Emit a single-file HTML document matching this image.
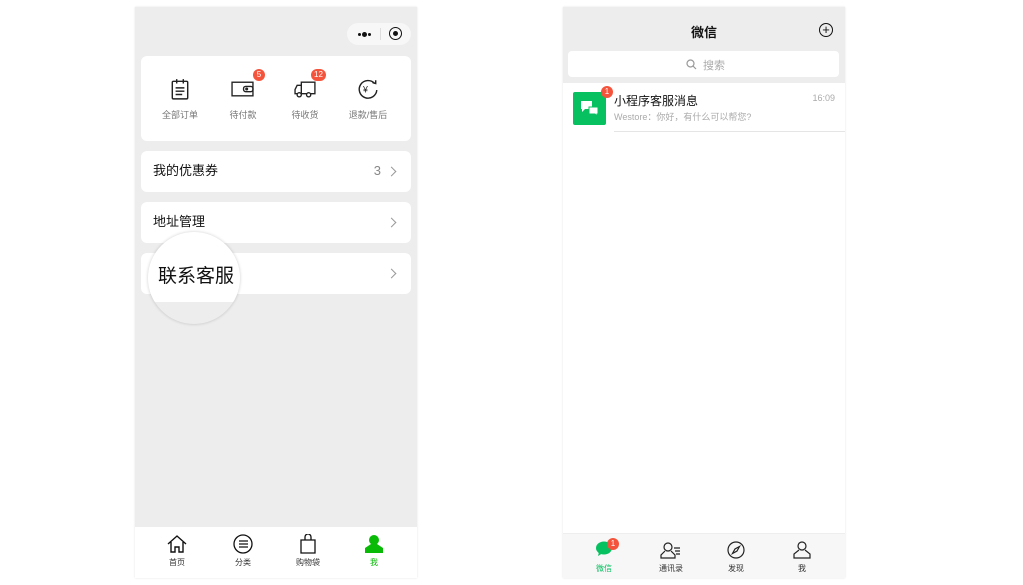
<!DOCTYPE html>
<html><head><meta charset="utf-8"><style>
*{margin:0;padding:0;box-sizing:border-box}
body{width:1023px;height:585px;background:#fff;position:relative;overflow:hidden;font-family:"Liberation Sans","Noto Sans CJK SC",sans-serif}
.a{position:absolute}
.ph{position:absolute;top:7px;width:282px;height:571px;box-shadow:0 0 2px rgba(0,0,0,.12)}
.card{position:absolute;left:6px;width:270px;background:#fff;border-radius:6px}
.t{position:absolute;font-size:13px;line-height:17px;color:#111}
.chev{position:absolute;right:16px;top:17px;width:7px;height:7px;border-right:1.3px solid #999;border-top:1.3px solid #999;transform:rotate(45deg)}
.lbl{position:absolute;font-size:9px;color:#777;text-align:center;width:60px}
.badge{position:absolute;background:#f5543c;color:#fff;font-size:8px;height:12px;line-height:12px;border-radius:6px;text-align:center;min-width:12px;padding:0 2px}
.tl{position:absolute;font-size:8px;color:#333;width:50px;text-align:center}
</style></head><body>
<div class="ph" style="left:135px;background:#ededed">
 <div class="a" style="left:212px;top:16px;width:64px;height:22px;border-radius:11px;background:#f7f7f7"></div>
 <div class="a" style="left:223px;top:26px;width:3px;height:3px;border-radius:2px;background:#111;box-shadow:5px 0 0 1px #111,10px 0 0 #111"></div>
 <div class="a" style="left:245px;top:21px;width:1px;height:12px;background:#ddd"></div>
 <div class="a" style="left:254px;top:20px;width:13px;height:13px;border-radius:50%;border:1.6px solid #111"></div>
 <div class="a" style="left:258px;top:24px;width:5px;height:5px;border-radius:50%;background:#111"></div>
 <div class="card" style="top:49px;height:85px">
  <svg class="a" style="left:28px;top:22px" width="22" height="22" viewBox="0 0 20 20" fill="none" stroke="#222" stroke-width="1.3"><rect x="3" y="3" width="14" height="16" rx="1"/><path d="M7 1v4M13 1v4M6 9h8M6 12h8M6 15h6"/></svg>
  <svg class="a" style="left:90px;top:23px" width="23" height="19" viewBox="0 0 22 18" fill="none" stroke="#222" stroke-width="1.3"><rect x="1" y="3" width="20" height="13"/><rect x="12" y="7" width="9" height="5" rx="2"/><circle cx="15" cy="9.5" r=".8"/></svg>
  <div class="badge" style="left:112px;top:13px">5</div>
  <svg class="a" style="left:153px;top:23px" width="23" height="19" viewBox="0 0 22 18" fill="none" stroke="#222" stroke-width="1.3"><path d="M7 3h13v11H7zM7 6H3L1 10v4h6"/><circle cx="5" cy="15" r="2" fill="#fff"/><circle cx="14" cy="15" r="2" fill="#fff"/></svg>
  <div class="badge" style="left:170px;top:13px;padding:0 3px">12</div>
  <svg class="a" style="left:216px;top:22px" width="22" height="22" viewBox="0 0 20 20" fill="none" stroke="#222" stroke-width="1.3"><path d="M16 5A8 8 0 1 0 18 11"/><path d="M14 4l3 1 0-3"/><text x="5.5" y="13" font-size="8" fill="#222" stroke="none" font-family="Liberation Sans">¥</text></svg>
  <div class="lbl" style="left:9px;top:52px">全部订单</div>
  <div class="lbl" style="left:72px;top:52px">待付款</div>
  <div class="lbl" style="left:134px;top:52px">待收货</div>
  <div class="lbl" style="left:197px;top:52px">退款/售后</div>
 </div>
 <div class="card" style="top:144px;height:41px"><div class="t" style="left:12px;top:11px">我的优惠券</div><div class="t" style="right:30px;top:11px;color:#888">3</div><div class="chev"></div></div>
 <div class="card" style="top:195px;height:41px"><div class="t" style="left:12px;top:11px">地址管理</div><div class="chev"></div></div>
 <div class="card" style="top:246px;height:41px"><div class="chev"></div></div>
 <div class="a" style="left:13px;top:225px;width:92px;height:92px;border-radius:50%;overflow:hidden;background:#ededed;box-shadow:0 0 3px rgba(0,0,0,.2)">
  <div class="a" style="left:0;top:0;width:92px;height:70px;background:#fff"></div>
  <div class="a" style="left:10px;top:29px;font-size:19px;color:#111">联系客服</div>
 </div>
 <div class="a" style="left:0;top:520px;width:282px;height:51px;background:#fff">
  <svg class="a" style="left:32px;top:8px" width="20" height="18" viewBox="0 0 20 18" fill="none" stroke="#111" stroke-width="1.4"><path d="M1 9L10 1l9 8M4 7v10h4v-5h4v5h4V7"/></svg>
  <svg class="a" style="left:98px;top:7px" width="20" height="20" viewBox="0 0 20 20" fill="none" stroke="#111" stroke-width="1.3"><circle cx="10" cy="10" r="9"/><path d="M6 7h9M6 10h9M6 13h9"/></svg>
  <svg class="a" style="left:164px;top:7px" width="18" height="20" viewBox="0 0 18 20" fill="none" stroke="#111" stroke-width="1.3"><path d="M2 6h14v13H2zM6 6V3a3 3 0 0 1 6 0v3"/></svg>
  <svg class="a" style="left:229px;top:7px" width="20" height="19" viewBox="0 0 20 19"><circle cx="10" cy="6" r="5" fill="#09bb07"/><path d="M7 10h6l6 4v5H1v-5z" fill="#09bb07"/></svg>
  <div class="tl" style="left:17px;top:30px">首页</div><div class="tl" style="left:83px;top:30px">分类</div><div class="tl" style="left:148px;top:30px">购物袋</div><div class="tl" style="left:214px;top:30px;color:#09bb07">我</div>
 </div>
</div>
<div class="ph" style="left:563px;background:#fff">
 <div class="a" style="left:0;top:0;width:282px;height:76px;background:#ededed"></div>
 <div class="a" style="left:0;top:15px;width:282px;text-align:center;font-size:13px;font-weight:bold;color:#111">微信</div>
 <div class="a" style="left:256px;top:16px;width:14px;height:14px;border-radius:50%;border:1.2px solid #111;font-size:13px;line-height:11px;text-align:center;color:#111">+</div>
 <div class="a" style="left:5px;top:44px;width:271px;height:26px;border-radius:4px;background:#fff"></div>
 <svg class="a" style="left:123px;top:52px" width="11" height="11" viewBox="0 0 11 11" fill="none" stroke="#999" stroke-width="1.2"><circle cx="4.5" cy="4.5" r="3.5"/><path d="M7 7l3 3"/></svg>
 <div class="a" style="left:140px;top:50px;font-size:11px;color:#aaa">搜索</div>
 <div class="a" style="left:10px;top:85px;width:33px;height:33px;background:#07c160;border-radius:2px"></div>
 <svg class="a" style="left:17px;top:93px" width="20" height="18" viewBox="0 0 20 18"><path d="M1 1h11v8H5l-3 3V9H1z" fill="#fff"/><path d="M9 7h9v7h-1v2l-2-2H9z" fill="#fff" stroke="#07c160" stroke-width="1"/></svg>
 <div class="badge" style="left:38px;top:79px">1</div>
 <div class="a" style="left:51px;top:85px;font-size:12px;color:#111">小程序客服消息</div>
 <div class="a" style="left:51px;top:103px;font-size:9px;color:#aaa">Westore：你好，有什么可以帮您?</div>
 <div class="a" style="right:10px;top:86px;font-size:9px;color:#aaa">16:09</div>
 <div class="a" style="left:51px;top:124px;width:231px;height:1px;background:#e5e5e5"></div>
 <div class="a" style="left:0;top:526px;width:282px;height:45px;background:#f7f7f7;border-top:1px solid #eee">
  <svg class="a" style="left:32px;top:7px" width="18" height="16" viewBox="0 0 18 16"><ellipse cx="9" cy="7" rx="8" ry="6.5" fill="#07c160"/><path d="M4 11l-1 4 5-3z" fill="#07c160"/></svg>
  <div class="badge" style="left:44px;top:4px">1</div>
  <svg class="a" style="left:97px;top:8px" width="22" height="18" viewBox="0 0 22 18" fill="none" stroke="#222" stroke-width="1.2"><circle cx="8" cy="5" r="4"/><path d="M5 9L1 13v3h14v-3l-4-4M14 6h6M15 9h5M16 12h4"/></svg>
  <svg class="a" style="left:164px;top:7px" width="18" height="18" viewBox="0 0 18 18" fill="none" stroke="#222" stroke-width="1.2"><circle cx="9" cy="9" r="8"/><path d="M12.5 5.5L10 10 5.5 12.5 8 8z"/></svg>
  <svg class="a" style="left:230px;top:7px" width="18" height="18" viewBox="0 0 18 18" fill="none" stroke="#222" stroke-width="1.2"><circle cx="9" cy="5" r="4"/><path d="M6 9L1 13v4h16v-4l-5-4"/></svg>
  <div class="tl" style="left:16px;top:29px;color:#07c160">微信</div><div class="tl" style="left:83px;top:29px">通讯录</div><div class="tl" style="left:148px;top:29px">发现</div><div class="tl" style="left:214px;top:29px">我</div>
 </div>
</div>
</body></html>
